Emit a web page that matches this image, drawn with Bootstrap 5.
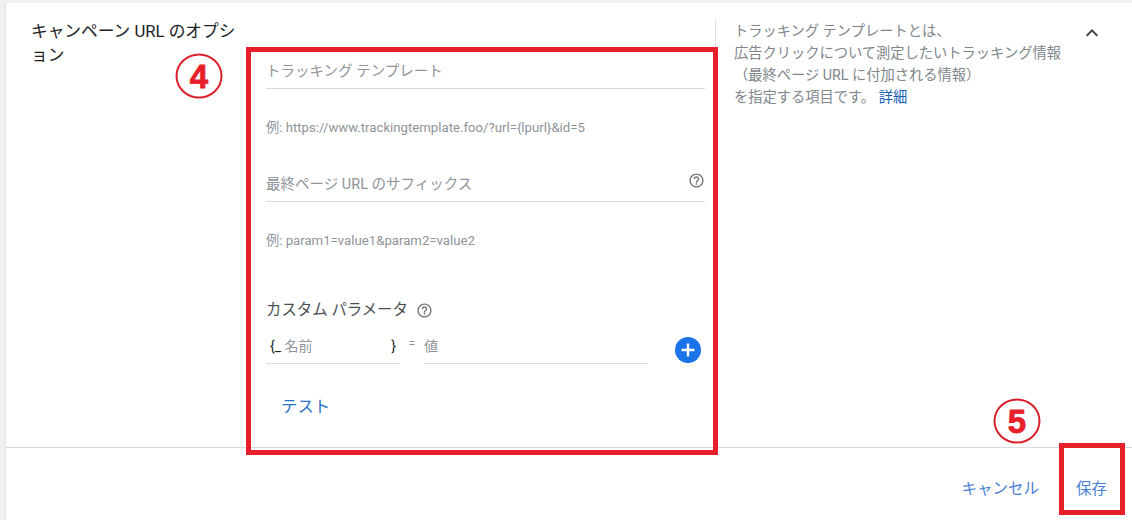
<!DOCTYPE html>
<html lang="ja">
<head>
  <meta charset="UTF-8" />
  <title>キャンペーン URL のオプション</title>
  <link href="https://cdn.jsdelivr.net/npm/bootstrap@5.3.3/dist/css/bootstrap.min.css" rel="stylesheet">
  <style>
    html, body { height: 100%; }
    body { background: #fff; font-family: Roboto, "Noto Sans CJK JP", sans-serif; color: #3c4043; overflow: hidden; }
    .opt-page { background: #f0f0f0; height: 520px; padding: 3px 0 0 5px; }
    .opt-card { border-left: 1px solid #e2e2e2; background: #fff; height: 517px; }
    .opt-main { height: 444px; padding-top: 1px; }
    .opt-title { width: 241px; padding: 16px 0 0 25px; font-size: 16.7px; line-height: 24px; color: #202124; flex: none; }
    .opt-title span { display: block; width: fit-content; }
    .opt-form { width: 468px; flex: none; padding: 0 10px 0 19px; }
    .opt-help { flex: none; width: 350px; margin-top: 16px; padding-left: 18px; border-left: 1px solid #e0e0e0; font-size: 14.25px; line-height: 22px; color: #80868b; height: 132px; }
    .opt-help a { color: #1a5fb4; text-decoration: none; }
    .opt-chevron { margin: 17px 0 0 15px; flex: none; }
    .opt-field { height: 43px; border-bottom: 1px solid #dadce0; font-size: 14.5px; color: #8f9499; padding-top: 15px; line-height: 22px; }
    .opt-field-a { margin-top: 42px; }
    .opt-field-b { margin-top: 23px; }
    .opt-hint { font-size: 13.2px; color: #8f9499; line-height: 16px; margin-top: 31px; }
    .opt-q { width: 17px; height: 17px; display: block; flex: none; }
    .opt-field .opt-q { margin-top: -2px; }
    .opt-label { font-size: 15.4px; color: #4a4e52; line-height: 20px; margin-top: 51px; }
    .opt-row { margin-top: 7px; }
    .opt-small { height: 37px; border-bottom: 1px solid #dadce0; font-size: 14px; color: #8f9499; line-height: 20px; padding-top: 9px; }
    .opt-name { width: 134px; padding-left: 4px; padding-right: 4px; }
    .opt-value { width: 224px; }
    .opt-eq { width: 24px; padding-top: 8px; font-size: 12px; color: #8f9499; text-align: center; }
    .opt-plus { margin: 10px 0 0 27px; }
    .opt-test { font-size: 16.4px; color: #2a73c9; text-decoration: none; display: inline-block; margin: 31px 0 0 15px; }
    .opt-foot { border-top: 1px solid #dadce0; height: 73px; padding: 12px 25px 0 0; gap: 37px; }
    .opt-btn { font-size: 15.5px; color: #4a7fd6; text-decoration: none; }
    .opt-mark { position: absolute; border: 5px solid #e71f2a; pointer-events: none; }
    .opt-mark-form { left: 246px; top: 47px; width: 472px; height: 408px; }
    .opt-mark-save { left: 1059px; top: 443px; width: 66px; height: 72px; }
    .opt-num { position: absolute; }
    .opt-num-4 { left: 175px; top: 53px; }
    .opt-num-5 { left: 993px; top: 398px; }
    .opt-num text { font-family: "Liberation Sans", sans-serif; font-weight: 700; font-size: 33px; fill: #e71f2a; stroke: #e71f2a; stroke-width: .8px; }
  </style>
</head>
<body>
  <div class="opt-page">
    <div class="opt-card">
      <div class="opt-main d-flex">
        <div class="opt-title"><span>キャンペーン URL のオプシ</span><span>ョン</span></div>

        <!-- フォーム -->
        <div class="opt-form">
          <div class="opt-field opt-field-a">トラッキング テンプレート</div>
          <div class="opt-hint">例: https://www.trackingtemplate.foo/?url={lpurl}&amp;id=5</div>
          <div class="opt-field opt-field-b d-flex justify-content-between">
            <span>最終ページ URL のサフィックス</span>
            <svg class="opt-q" viewBox="0 0 24 24" fill="#757575"><path d="M11 18h2v-2h-2v2zm1-16C6.480 2 2 6.480 2 12s4.480 10 10 10 10-4.480 10-10S17.520 2 12 2zm0 18c-4.410 0-8-3.590-8-8s3.590-8 8-8 8 3.590 8 8-3.590 8-8 8zm0-14c-2.210 0-4 1.790-4 4h2c0-1.100.9-2 2-2s2 .9 2 2c0 2-3 1.750-3 5h2c0-2.250 3-2.500 3-5 0-2.210-1.790-4-4-4z"/></svg>
          </div>
          <div class="opt-hint">例: param1=value1&amp;param2=value2</div>
          <div class="d-flex align-items-center gap-2 opt-label">
            カスタム パラメータ
            <svg class="opt-q" viewBox="0 0 24 24" fill="#757575"><path d="M11 18h2v-2h-2v2zm1-16C6.480 2 2 6.480 2 12s4.480 10 10 10 10-4.480 10-10S17.520 2 12 2zm0 18c-4.410 0-8-3.590-8-8s3.590-8 8-8 8 3.590 8 8-3.590 8-8 8zm0-14c-2.210 0-4 1.790-4 4h2c0-1.100.9-2 2-2s2 .9 2 2c0 2-3 1.750-3 5h2c0-2.250 3-2.500 3-5 0-2.210-1.790-4-4-4z"/></svg>
          </div>
          <div class="d-flex opt-row">
            <div class="opt-small opt-name d-flex justify-content-between">
              <span><span class="text-dark">{_</span> 名前</span><span class="text-dark">}</span>
            </div>
            <div class="opt-eq">=</div>
            <div class="opt-small opt-value">値</div>
            <svg class="opt-plus" width="26" height="26" viewBox="0 0 26 26"><circle cx="13" cy="13" r="13" fill="#1a73e8"/><path d="M13 6.500v13M6.500 13h13" stroke="#fff" stroke-width="2.400"/></svg>
          </div>
          <a href="#" class="opt-test">テスト</a>
        </div>

        <!-- ヘルプ -->
        <div class="opt-help">
          トラッキング テンプレートとは、<br>
          広告クリックについて測定したいトラッキング情報<br>
          （最終ページ URL に付加される情報）<br>
          を指定する項目です。 <a href="#">詳細</a>
        </div>
        <svg class="opt-chevron" width="24" height="24" viewBox="0 0 24 24" fill="#444"><path d="M12 8l-6 6 1.410 1.410L12 10.830l4.590 4.580L18 14z"/></svg>
      </div>

      <div class="opt-foot d-flex justify-content-end align-items-center">
        <a href="#" class="opt-btn">キャンセル</a>
        <a href="#" class="opt-btn">保存</a>
      </div>
    </div>
  </div>

  <!-- 注釈 -->
  <div class="opt-mark opt-mark-form"></div>
  <div class="opt-mark opt-mark-save"></div>
  <svg class="opt-num opt-num-4" width="48" height="46" viewBox="0 0 48 46"><ellipse cx="24" cy="23" rx="22.500" ry="21.500" fill="#fff" stroke="#d9202a" stroke-width="2"/><text x="24" y="35" text-anchor="middle">4</text></svg>
  <svg class="opt-num opt-num-5" width="48" height="46" viewBox="0 0 48 46"><ellipse cx="24" cy="23" rx="22.500" ry="21.500" fill="#fff" stroke="#d9202a" stroke-width="2"/><text x="24" y="35" text-anchor="middle">5</text></svg>

  <script src="https://cdn.jsdelivr.net/npm/bootstrap@5.3.3/dist/js/bootstrap.bundle.min.js"></script>
</body>
</html>
